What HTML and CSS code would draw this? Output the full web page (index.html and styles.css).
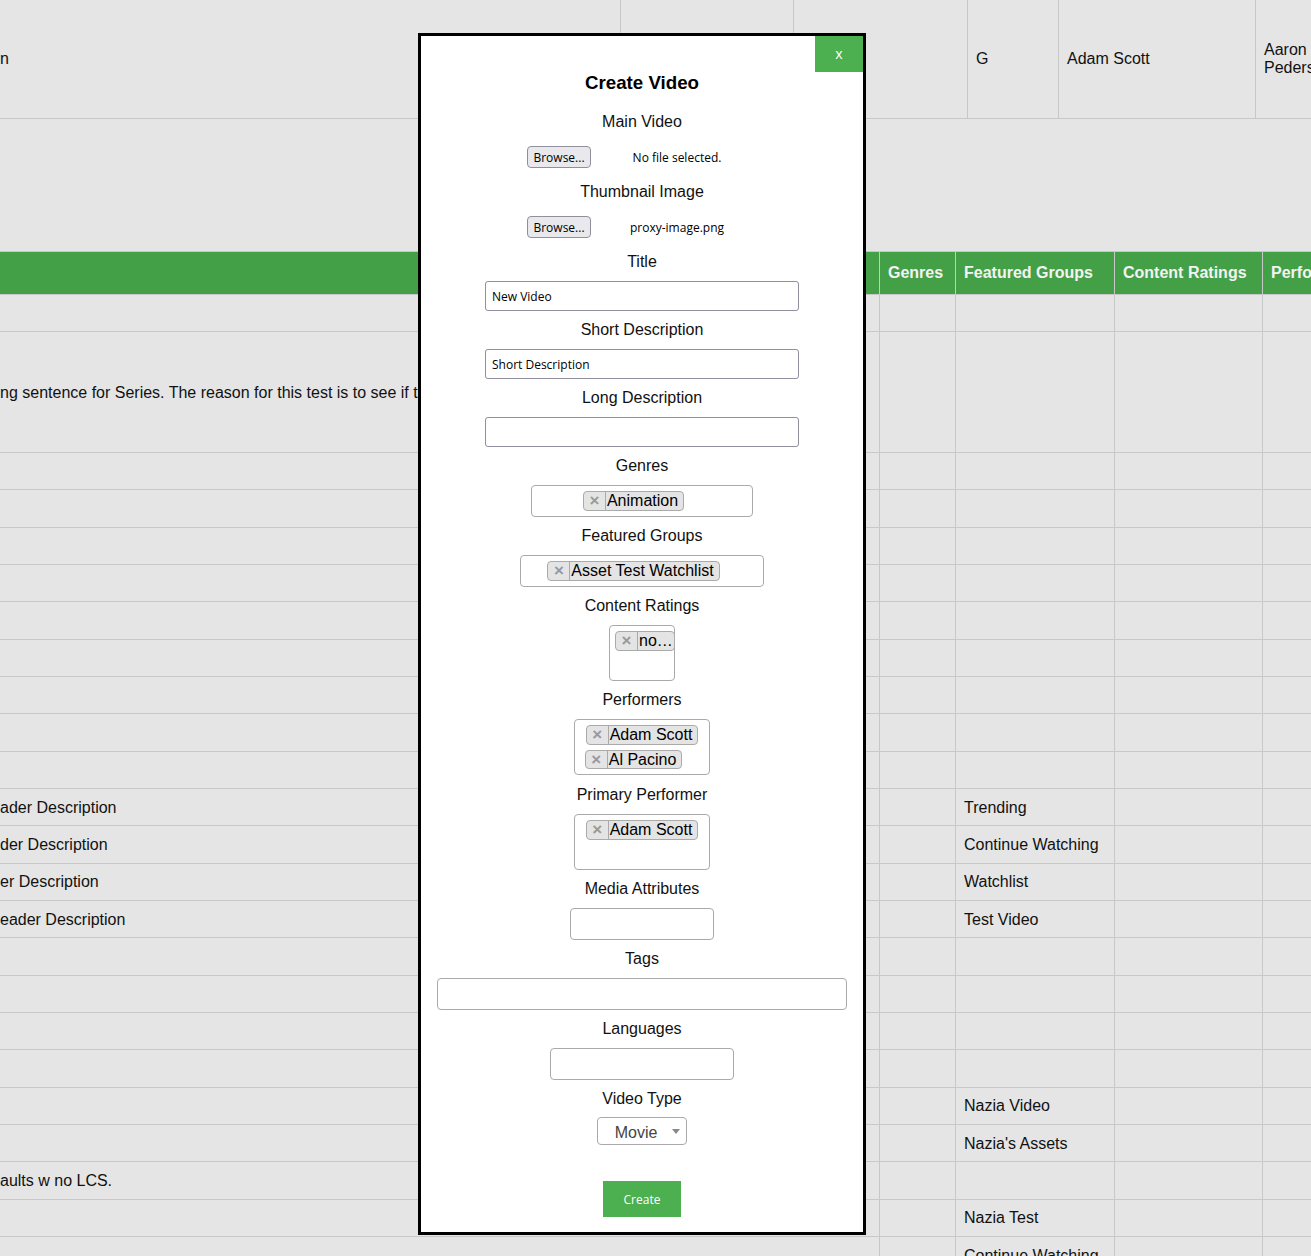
FILE: index.html
```html
<!DOCTYPE html>
<html lang="en">
<head>
<meta charset="utf-8">
<title>Create Video</title>
<link rel="stylesheet" href="styles.css">
</head>
<body>
<div class="sheet">
  <div class="row row--top">
    <div class="cell t1">n</div>
    <div class="cell t2"></div>
    <div class="cell t3"></div>
    <div class="cell t4">G</div>
    <div class="cell t5">Adam Scott</div>
    <div class="cell t6">Aaron Pedersen</div>
  </div>
  <div class="gap"></div>
  <div class="row row--head">
    <div class="cell c1a"></div><div class="cell c1b"></div>
    <div class="cell c2">Genres</div>
    <div class="cell c3">Featured Groups</div>
    <div class="cell c4">Content Ratings</div>
    <div class="cell c5">Performers</div>
  </div>
  <div class="row row--first"><div class="cell c1a"></div><div class="cell c1b"></div><div class="cell c2"></div><div class="cell c3"></div><div class="cell c4"></div><div class="cell c5"></div></div>
  <div class="row row--tall"><div class="cell c1a">ng sentence for Series. The reason for this test is to see if t</div><div class="cell c1b"></div><div class="cell c2"></div><div class="cell c3"></div><div class="cell c4"></div><div class="cell c5"></div></div>
  <div class="row"><div class="cell c1a"></div><div class="cell c1b"></div><div class="cell c2"></div><div class="cell c3"></div><div class="cell c4"></div><div class="cell c5"></div></div>
  <div class="row"><div class="cell c1a"></div><div class="cell c1b"></div><div class="cell c2"></div><div class="cell c3"></div><div class="cell c4"></div><div class="cell c5"></div></div>
  <div class="row"><div class="cell c1a"></div><div class="cell c1b"></div><div class="cell c2"></div><div class="cell c3"></div><div class="cell c4"></div><div class="cell c5"></div></div>
  <div class="row"><div class="cell c1a"></div><div class="cell c1b"></div><div class="cell c2"></div><div class="cell c3"></div><div class="cell c4"></div><div class="cell c5"></div></div>
  <div class="row"><div class="cell c1a"></div><div class="cell c1b"></div><div class="cell c2"></div><div class="cell c3"></div><div class="cell c4"></div><div class="cell c5"></div></div>
  <div class="row"><div class="cell c1a"></div><div class="cell c1b"></div><div class="cell c2"></div><div class="cell c3"></div><div class="cell c4"></div><div class="cell c5"></div></div>
  <div class="row"><div class="cell c1a"></div><div class="cell c1b"></div><div class="cell c2"></div><div class="cell c3"></div><div class="cell c4"></div><div class="cell c5"></div></div>
  <div class="row"><div class="cell c1a"></div><div class="cell c1b"></div><div class="cell c2"></div><div class="cell c3"></div><div class="cell c4"></div><div class="cell c5"></div></div>
  <div class="row"><div class="cell c1a"></div><div class="cell c1b"></div><div class="cell c2"></div><div class="cell c3"></div><div class="cell c4"></div><div class="cell c5"></div></div>
  <div class="row"><div class="cell c1a">ader Description</div><div class="cell c1b"></div><div class="cell c2"></div><div class="cell c3">Trending</div><div class="cell c4"></div><div class="cell c5"></div></div>
  <div class="row"><div class="cell c1a">der Description</div><div class="cell c1b"></div><div class="cell c2"></div><div class="cell c3">Continue Watching</div><div class="cell c4"></div><div class="cell c5"></div></div>
  <div class="row"><div class="cell c1a">er Description</div><div class="cell c1b"></div><div class="cell c2"></div><div class="cell c3">Watchlist</div><div class="cell c4"></div><div class="cell c5"></div></div>
  <div class="row"><div class="cell c1a">eader Description</div><div class="cell c1b"></div><div class="cell c2"></div><div class="cell c3">Test Video</div><div class="cell c4"></div><div class="cell c5"></div></div>
  <div class="row"><div class="cell c1a"></div><div class="cell c1b"></div><div class="cell c2"></div><div class="cell c3"></div><div class="cell c4"></div><div class="cell c5"></div></div>
  <div class="row"><div class="cell c1a"></div><div class="cell c1b"></div><div class="cell c2"></div><div class="cell c3"></div><div class="cell c4"></div><div class="cell c5"></div></div>
  <div class="row"><div class="cell c1a"></div><div class="cell c1b"></div><div class="cell c2"></div><div class="cell c3"></div><div class="cell c4"></div><div class="cell c5"></div></div>
  <div class="row"><div class="cell c1a"></div><div class="cell c1b"></div><div class="cell c2"></div><div class="cell c3"></div><div class="cell c4"></div><div class="cell c5"></div></div>
  <div class="row"><div class="cell c1a"></div><div class="cell c1b"></div><div class="cell c2"></div><div class="cell c3">Nazia Video</div><div class="cell c4"></div><div class="cell c5"></div></div>
  <div class="row"><div class="cell c1a"></div><div class="cell c1b"></div><div class="cell c2"></div><div class="cell c3">Nazia's Assets</div><div class="cell c4"></div><div class="cell c5"></div></div>
  <div class="row"><div class="cell c1a">aults w no LCS.</div><div class="cell c1b"></div><div class="cell c2"></div><div class="cell c3"></div><div class="cell c4"></div><div class="cell c5"></div></div>
  <div class="row"><div class="cell c1a"></div><div class="cell c1b"></div><div class="cell c2"></div><div class="cell c3">Nazia Test</div><div class="cell c4"></div><div class="cell c5"></div></div>
  <div class="row"><div class="cell c1a"></div><div class="cell c1b"></div><div class="cell c2"></div><div class="cell c3">Continue Watching</div><div class="cell c4"></div><div class="cell c5"></div></div>
</div>

<div class="modal">
  <button class="close" type="button">x</button>
  <h2 class="modal-title">Create Video</h2>

  <div class="field-label">Main Video</div>
  <div class="file-row control"><span class="browse">Browse...</span><span class="file-name">No file selected.</span></div>

  <div class="field-label">Thumbnail Image</div>
  <div class="file-row control"><span class="browse">Browse...</span><span class="file-name">proxy-image.png</span></div>

  <div class="field-label">Title</div>
  <input class="text-input control" type="text" value="New Video">

  <div class="field-label">Short Description</div>
  <input class="text-input control" type="text" value="Short Description">

  <div class="field-label">Long Description</div>
  <input class="text-input control" type="text" value="">

  <div class="field-label">Genres</div>
  <div class="multi control m-genres">
    <div class="line"><span class="tag"><span class="tag-x">×</span><span class="tag-text">Animation</span></span><span class="stub"></span></div>
  </div>

  <div class="field-label">Featured Groups</div>
  <div class="multi control m-groups">
    <div class="line"><span class="tag"><span class="tag-x">×</span><span class="tag-text">Asset Test Watchlist</span></span><span class="stub"></span></div>
  </div>

  <div class="field-label">Content Ratings</div>
  <div class="multi control m-ratings">
    <div class="line line--start"><span class="tag tag--clip"><span class="tag-x">×</span><span class="tag-text">no…</span></span></div>
    <div class="line"><span class="stub"></span></div>
  </div>

  <div class="field-label">Performers</div>
  <div class="multi control control--loose m-performers">
    <div class="line"><span class="tag"><span class="tag-x">×</span><span class="tag-text">Adam Scott</span></span></div>
    <div class="line"><span class="tag"><span class="tag-x">×</span><span class="tag-text">Al Pacino</span></span><span class="stub"></span></div>
  </div>

  <div class="field-label">Primary Performer</div>
  <div class="multi control m-performers">
    <div class="line"><span class="tag"><span class="tag-x">×</span><span class="tag-text">Adam Scott</span></span></div>
    <div class="line"><span class="stub"></span></div>
  </div>

  <div class="field-label">Media Attributes</div>
  <div class="multi control m-media"></div>

  <div class="field-label">Tags</div>
  <div class="multi control m-tags"></div>

  <div class="field-label">Languages</div>
  <div class="multi control m-languages"></div>

  <div class="field-label">Video Type</div>
  <div class="single">
    <span class="single-text">Movie</span>
    <span class="single-arrow"><b></b></span>
  </div>

  <button class="create" type="button">Create</button>
</div>
</body>
</html>
```

FILE: styles.css
```css
html, body {
  margin: 0;
  padding: 0;
  overflow: hidden;
}

body {
  position: relative;
  width: 1311px;
  height: 1256px;
  background: #e5e5e5;
  font-family: "Liberation Sans", Arial, sans-serif;
  font-size: 16px;
  color: #111;
}

/* ---------- background sheet ---------- */
.sheet {
  width: 1700px;
  display: flex;
  flex-direction: column;
}

.row {
  display: flex;
  flex: none;
  box-sizing: border-box;
  height: 37.33px;
  border-bottom: 1px solid #c8c8c8;
}

.row--top { height: 119px; }
.row--first { height: 37px; }
.row--tall { height: 121px; }

.row--head {
  height: 44px;
  border-top: 1px solid #c8c8c8;
  background: #43a047;
  color: #f3f3f3;
  font-weight: bold;
}

.gap {
  height: 132px;
  flex: none;
}

.cell {
  flex: none;
  box-sizing: border-box;
  display: flex;
  align-items: center;
  padding: 0 8px;
  border-right: 1px solid #c8c8c8;
  overflow: hidden;
  white-space: nowrap;
}

.row:not(.row--top):not(.row--head) .cell {
  padding-top: 1px;
}

.t1 { width: 621px; padding-left: 0; }
.t2 { width: 173px; }
.t3 { width: 174px; }
.t4 { width: 91px; }
.t5 { width: 197px; }
.t6 { width: 100px; white-space: normal; line-height: 18px; }

.c1a { width: 420px; padding-left: 0; padding-right: 0; border-right: 0; }
.c1b { width: 460px; }
.c2 { width: 76px; }
.c3 { width: 159px; }
.c4 { width: 148px; }
.c5 { width: 300px; }

/* ---------- modal ---------- */
.modal {
  position: absolute;
  left: 418px;
  top: 33px;
  width: 448px;
  height: 1202px;
  box-sizing: border-box;
  border: 3px solid #000;
  background: #fff;
  padding-top: 35px;
  display: flex;
  flex-direction: column;
  align-items: center;
  z-index: 2;
}

.close {
  position: absolute;
  top: 0;
  right: 0;
  width: 48px;
  height: 36px;
  margin: 0;
  padding: 0;
  border: 0;
  background: #4caf50;
  color: #fff;
  font-family: "Open Sans", sans-serif;
  font-size: 14px;
  line-height: 36px;
}

.modal-title {
  margin: 0 0 19px;
  font-size: 18.72px;
  line-height: 23px;
  font-weight: bold;
  color: #000;
}

.field-label {
  line-height: 18px;
  margin-bottom: 10px;
  color: #111;
}

.control {
  margin-bottom: 10px;
  flex: none;
}

.control--loose {
  margin-bottom: 11px;
}

.file-row {
  display: flex;
  align-items: center;
  width: 236px;
  height: 32px;
  margin-left: 6px;
  font-family: "Open Sans", sans-serif;
  font-size: 12px;
  color: #000;
}

.browse {
  box-sizing: border-box;
  width: 64px;
  height: 22px;
  display: flex;
  align-items: center;
  justify-content: center;
  border: 1px solid #8f8f9d;
  border-radius: 4px;
  background: #e9e9ed;
}

.file-name {
  width: 172px;
  text-align: center;
}

.text-input {
  box-sizing: border-box;
  width: 314px;
  height: 30px;
  margin-top: 0;
  padding: 0 6px;
  border: 1px solid #8f8f9d;
  border-radius: 3px;
  background: #fff;
  font-family: "Open Sans", sans-serif;
  font-size: 12px;
  color: #000;
  outline: none;
}

.multi {
  box-sizing: border-box;
  min-height: 32px;
  padding-bottom: 5px;
  border: 1px solid #aaa;
  border-radius: 4px;
  background: #fff;
}

.m-genres { width: 222px; }
.m-groups { width: 244px; }
.m-ratings { width: 66px; }
.m-performers { width: 136px; }
.m-media { width: 144px; }
.m-tags { width: 410px; }
.m-languages { width: 184px; }

.line {
  display: flex;
  justify-content: center;
  height: 19.5px;
  margin-top: 5px;
  overflow: hidden;
}

.line--start {
  justify-content: flex-start;
  padding-left: 5px;
}

.tag {
  flex: none;
  display: flex;
  box-sizing: border-box;
  height: 19.5px;
  border: 1px solid #aaa;
  border-radius: 4px;
  background: #e4e4e4;
  line-height: 17.5px;
  color: #000;
  white-space: nowrap;
}

.tag-x {
  width: 21px;
  border-right: 1px solid #aaa;
  color: #999;
  font-weight: bold;
  font-size: 17px;
  text-align: center;
}

.tag-text {
  padding: 0 5px 0 1px;
}

.tag--clip .tag-text {
  padding-right: 1px;
}

.stub {
  flex: none;
  width: 17px;
}

.single {
  box-sizing: border-box;
  width: 90px;
  height: 28px;
  margin-top: -1px;
  margin-bottom: 36px;
  display: flex;
  align-items: center;
  border: 1px solid #aaa;
  border-radius: 4px;
  background: #fff;
  color: #444;
  flex: none;
}

.single-text {
  flex: 1;
  padding-left: 8px;
  padding-top: 3px;
  text-align: center;
  line-height: 23px;
}

.single-arrow {
  width: 20px;
  height: 26px;
  display: flex;
  align-items: center;
  justify-content: center;
}

.single-arrow b {
  width: 0;
  height: 0;
  border-style: solid;
  border-width: 5px 4px 0 4px;
  border-color: #888 transparent transparent transparent;
}

.create {
  width: 78px;
  height: 36px;
  margin: 0;
  padding: 0;
  border: 0;
  background: #4caf50;
  color: #fff;
  font-family: "Open Sans", sans-serif;
  font-size: 12px;
  flex: none;
}
```
